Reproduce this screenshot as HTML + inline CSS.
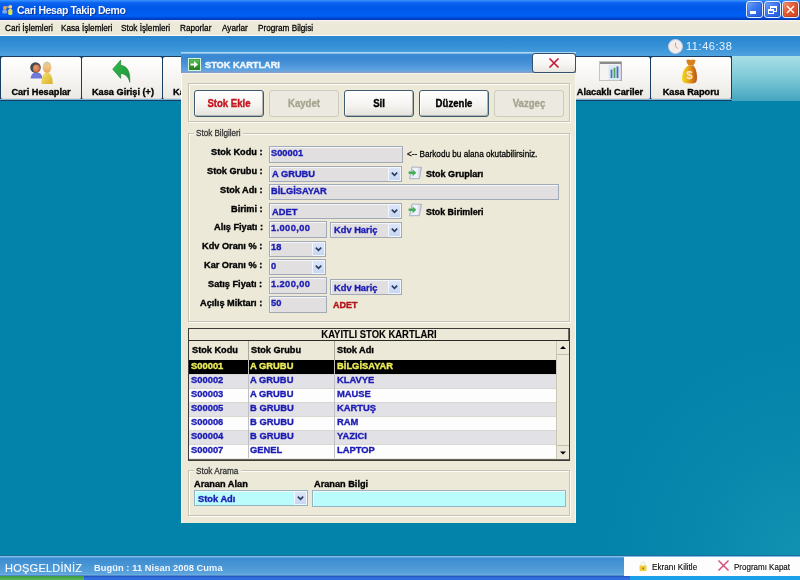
<!DOCTYPE html>
<html><head><meta charset="utf-8">
<style>
*{box-sizing:border-box;margin:0;padding:0}
html,body{width:800px;height:580px;overflow:hidden;background:radial-gradient(200px 220px at 800px 556px,#1292b2 0,#0888ac 50%,#0383aa 100%) #0383aa;font-family:"Liberation Sans",sans-serif;position:relative}
.a{position:absolute}
.t{position:absolute;white-space:nowrap;line-height:1;will-change:transform}

</style></head><body>
<div class="a" style="left:0px;top:0px;width:800px;height:20px;background:linear-gradient(#3d9aff 0,#2a80fa 1px,#0a62f0 3px,#0058e8 8px,#005cf2 14px,#0060f6 16px,#0048d8 18px,#0036b0 20px)"></div>
<svg class="a" style="left:0px;top:0px" width="16" height="18" viewBox="0 0 16 18">
<circle cx="4.8" cy="8" r="1.9" fill="#e8a050"/><rect x="2.2" y="10" width="5" height="3.4" rx="1.5" fill="#80a8f0"/>
<path d="M5.5 7 Q8 6.5 9.5 7.5" stroke="#e0c0a0" stroke-width="1" fill="none"/>
<circle cx="10.3" cy="6.8" r="1.9" fill="#f0d090"/><rect x="8.2" y="9" width="4.2" height="6" rx="1.6" fill="#e0e050"/></svg>
<div class="t" style="top:5.01px;font-size:10.50px;color:#f4f8ff;left:17.00px;transform:scaleY(1.060);transform-origin:0 8.89px;font-weight:bold;-webkit-text-stroke:0.35px #f4f8ff;letter-spacing:-0.38px;text-shadow:1px 1px 0 #0a3aa0;-webkit-text-stroke:0;">Cari Hesap Takip Demo</div>
<div class="a" style="left:746px;top:1px;width:17px;height:17px;border:1px solid #e4eeff;border-radius:3px;background:linear-gradient(135deg,#7aa8ff,#3a78f0 45%,#2058e0);box-shadow:inset 0 0 0 1px rgba(0,0,60,0.15)"></div>
<div class="a" style="left:764px;top:1px;width:17px;height:17px;border:1px solid #e4eeff;border-radius:3px;background:linear-gradient(135deg,#7aa8ff,#3a78f0 45%,#2058e0);box-shadow:inset 0 0 0 1px rgba(0,0,60,0.15)"></div>
<div class="a" style="left:782px;top:1px;width:17px;height:17px;border:1px solid #e4eeff;border-radius:3px;background:linear-gradient(135deg,#f39c7c,#e35a32 45%,#d04020);box-shadow:inset 0 0 0 1px rgba(0,0,60,0.15)"></div>
<div class="a" style="left:750px;top:11px;width:6px;height:2.5px;background:#fff"></div>
<div class="a" style="left:770px;top:6px;width:7px;height:6px;border:1px solid #fff;border-top-width:2px"></div>
<div class="a" style="left:768px;top:9px;width:6px;height:5px;border:1px solid #fff;border-top-width:2px;background:#3a78f0"></div>
<svg class="a" style="left:782px;top:1px" width="17" height="17"><path d="M5 5 L12 12 M12 5 L5 12" stroke="#fff" stroke-width="1.5"/></svg>
<div class="a" style="left:0px;top:20px;width:800px;height:15px;background:linear-gradient(#f6f6f2 0,#eeebde 2px,#ece9d8 4px)"></div>
<div class="a" style="left:0px;top:35px;width:800px;height:1px;background:#fafaf6"></div>
<div class="t" style="top:25.26px;font-size:8.20px;color:#000;left:5.00px;transform:scaleY(1.060);transform-origin:0 6.94px;-webkit-text-stroke:0.25px #000;">Cari İşlemleri</div>
<div class="t" style="top:25.26px;font-size:8.20px;color:#000;left:61.00px;transform:scaleY(1.060);transform-origin:0 6.94px;-webkit-text-stroke:0.25px #000;">Kasa İşlemleri</div>
<div class="t" style="top:25.26px;font-size:8.20px;color:#000;left:121.00px;transform:scaleY(1.060);transform-origin:0 6.94px;-webkit-text-stroke:0.25px #000;">Stok İşlemleri</div>
<div class="t" style="top:25.26px;font-size:8.20px;color:#000;left:180.00px;transform:scaleY(1.060);transform-origin:0 6.94px;-webkit-text-stroke:0.25px #000;">Raporlar</div>
<div class="t" style="top:25.26px;font-size:8.20px;color:#000;left:221.60px;transform:scaleY(1.060);transform-origin:0 6.94px;-webkit-text-stroke:0.25px #000;">Ayarlar</div>
<div class="t" style="top:25.26px;font-size:8.20px;color:#000;left:258.00px;transform:scaleY(1.060);transform-origin:0 6.94px;-webkit-text-stroke:0.25px #000;">Program Bilgisi</div>
<div class="a" style="left:0px;top:36px;width:800px;height:20px;background:linear-gradient(#2a86ce,#3590d6 50%,#4fa2de)"></div>
<div class="a" style="left:0px;top:56px;width:800px;height:45px;background:linear-gradient(#a8dfe6,#80cbd8 45%,#45a5bf)"></div>
<div class="a" style="left:0px;top:56px;width:732px;height:45px;background:#183e64"></div>
<div class="a" style="left:1px;top:57px;width:80px;height:42px;background:linear-gradient(#ffffff,#f6f5f2 50%,#ebe9e3);border-radius:2px;box-shadow:inset 0 -1px 0 #dcd9cf"></div>
<div class="a" style="left:82px;top:57px;width:80px;height:42px;background:linear-gradient(#ffffff,#f6f5f2 50%,#ebe9e3);border-radius:2px;box-shadow:inset 0 -1px 0 #dcd9cf"></div>
<div class="a" style="left:163px;top:57px;width:80px;height:42px;background:linear-gradient(#ffffff,#f6f5f2 50%,#ebe9e3);border-radius:2px;box-shadow:inset 0 -1px 0 #dcd9cf"></div>
<div class="a" style="left:570px;top:57px;width:80px;height:42px;background:linear-gradient(#ffffff,#f6f5f2 50%,#ebe9e3);border-radius:2px;box-shadow:inset 0 -1px 0 #dcd9cf"></div>
<div class="a" style="left:651px;top:57px;width:80px;height:42px;background:linear-gradient(#ffffff,#f6f5f2 50%,#ebe9e3);border-radius:2px;box-shadow:inset 0 -1px 0 #dcd9cf"></div>
<div class="a" style="left:0px;top:99px;width:732px;height:1px;background:#7fb8e0"></div>
<div class="t" style="top:88.01px;font-size:9.20px;color:#000;left:41.00px;transform:translateX(-50%) scaleY(1.060);transform-origin:0 7.79px;font-weight:bold;-webkit-text-stroke:0.35px #000;">Cari Hesaplar</div>
<div class="t" style="top:88.01px;font-size:9.20px;color:#000;left:122.50px;transform:translateX(-50%) scaleY(1.060);transform-origin:0 7.79px;font-weight:bold;-webkit-text-stroke:0.35px #000;">Kasa Girişi (+)</div>
<div class="t" style="top:88.01px;font-size:9.20px;color:#000;left:172.80px;transform:scaleY(1.060);transform-origin:0 7.79px;font-weight:bold;-webkit-text-stroke:0.35px #000;">Kasa Çıkışı (-)</div>
<div class="t" style="top:87.61px;font-size:9.20px;color:#000;left:610.00px;transform:translateX(-50%) scaleY(1.060);transform-origin:0 7.79px;font-weight:bold;-webkit-text-stroke:0.35px #000;">Alacaklı Cariler</div>
<div class="t" style="top:87.61px;font-size:9.20px;color:#000;left:691.30px;transform:translateX(-50%) scaleY(1.060);transform-origin:0 7.79px;font-weight:bold;-webkit-text-stroke:0.35px #000;">Kasa Raporu</div>
<svg class="a" style="left:26px;top:58px" width="32" height="28" viewBox="0 0 32 28">
<defs>
<radialGradient id="face1" cx="0.4" cy="0.4" r="0.7"><stop offset="0" stop-color="#f2a070"/><stop offset="1" stop-color="#b85a30"/></radialGradient>
<linearGradient id="body2" x1="0" y1="0" x2="1" y2="1"><stop offset="0" stop-color="#f4e27a"/><stop offset="1" stop-color="#d8b020"/></linearGradient>
<linearGradient id="head2" x1="0" y1="0" x2="0" y2="1"><stop offset="0" stop-color="#c8c8b0"/><stop offset="0.4" stop-color="#f0c888"/><stop offset="1" stop-color="#e8a860"/></linearGradient>
</defs>
<path d="M4.5 20.5 Q5 14.5 10.5 14.2 Q16 14.5 16.5 20.5 Z" fill="#7078d8"/>
<ellipse cx="9.5" cy="9.5" rx="5.3" ry="5.3" fill="#404c52"/>
<ellipse cx="10.5" cy="10.5" rx="3.6" ry="4" fill="url(#face1)"/>
<path d="M15.5 26 Q15.5 14.5 21 14 Q26.5 14.5 26.8 26 Z" fill="url(#body2)"/>
<ellipse cx="21" cy="9.2" rx="4.4" ry="5.6" fill="url(#head2)"/>
</svg><svg class="a" style="left:106px;top:56px" width="32" height="30" viewBox="0 0 32 30">
<defs><linearGradient id="arr" x1="0" y1="0" x2="1" y2="1"><stop offset="0" stop-color="#2fc24a"/><stop offset="1" stop-color="#1e8e38"/></linearGradient></defs>
<path d="M6.7 13.2 L14.7 4.1 L14.7 9.3 C20.5 9.8 24.5 14.5 23.8 26.4 C22.5 20.5 19 17.8 14.7 17.6 L14.7 22.4 Z" fill="url(#arr)" stroke="#1a7a30" stroke-width="0.6"/>
</svg><svg class="a" style="left:594px;top:56px" width="32" height="30" viewBox="0 0 32 30">
<rect x="5.5" y="5.5" width="22" height="19" fill="#f4f4f2" stroke="#c4c4c4" stroke-width="1"/>
<rect x="26.5" y="6" width="1.2" height="19" fill="#9a9a9a"/>
<rect x="6" y="6" width="21" height="2" fill="#8a8a8a"/>
<rect x="14.5" y="9" width="12" height="15" fill="#dde8f6"/>
<rect x="16.6" y="13.5" width="1.8" height="8.5" fill="#4a74b8"/>
<rect x="19.6" y="11.8" width="1.8" height="10.2" fill="#48a858"/>
<rect x="22.6" y="10.5" width="1.8" height="11.5" fill="#4a68c0"/>
</svg><svg class="a" style="left:674px;top:56px" width="32" height="30" viewBox="0 0 32 30">
<defs><linearGradient id="bag" x1="0" y1="0" x2="1" y2="0"><stop offset="0" stop-color="#f4dc10"/><stop offset="0.4" stop-color="#eaa818"/><stop offset="1" stop-color="#b85420"/></linearGradient></defs>
<path d="M12.3 4.2 Q14 3 16.6 3.9 Q19.2 3 21.6 4.2 Q21.2 7.6 19.2 9.6 L14.6 9.6 Q12.5 7.6 12.3 4.2 Z" fill="#d8801e"/>
<path d="M14.6 9.6 L19.2 9.6 Q21.8 11.8 22.6 17 Q23.6 23 22.2 26 Q20.6 27.6 15.5 27.5 Q9.6 27.5 8.3 25 Q7.4 22 8.9 16.5 Q10.6 11.6 14.6 9.6 Z" fill="url(#bag)"/>
<text x="15.5" y="23" font-family="Liberation Sans" font-weight="bold" font-size="11.5" fill="#fce8bc" text-anchor="middle">$</text>
</svg><svg class="a" style="left:668px;top:39px" width="15" height="15" viewBox="0 0 15 15">
<circle cx="7.5" cy="7.5" r="7" fill="#eef0f4" stroke="#c8ccd4" stroke-width="1"/><circle cx="7.5" cy="7.5" r="5" fill="#f6ece6"/>
<path d="M7.5 3.5 V7.5 L10 9.5" stroke="#b9a9a0" stroke-width="1" fill="none"/></svg>
<div class="t" style="top:41.49px;font-size:11.00px;color:#eaf4ff;left:686.00px;transform:scaleY(1.060);transform-origin:0 9.31px;-webkit-text-stroke:0.25px #eaf4ff;letter-spacing:0.55px;-webkit-text-stroke:0;">11:46:38</div>
<div class="a" style="left:0px;top:555px;width:800px;height:1px;background:#1a6e9a"></div>
<div class="a" style="left:0px;top:556px;width:800px;height:20px;background:linear-gradient(#80bce8 0,#80bce8 1px,#3a8cd0 2px,#4a96d4 50%,#5ca4dc 18px,#78b6e6 19px,#2a5cb0 20px)"></div>
<div class="t" style="top:562.59px;font-size:11.00px;color:#f4faff;left:5.00px;transform:scaleY(1.060);transform-origin:0 9.31px;-webkit-text-stroke:0.25px #f4faff;letter-spacing:0.25px;-webkit-text-stroke:0.15px #f4faff;">HOŞGELDİNİZ</div>
<div class="t" style="top:563.73px;font-size:9.30px;color:#f0f6ff;left:94.00px;transform:scaleY(1.060);transform-origin:0 7.87px;font-weight:bold;-webkit-text-stroke:0.35px #f0f6ff;letter-spacing:0.06px;-webkit-text-stroke:0;">Bugün : 11 Nisan 2008 Cuma</div>
<div class="a" style="left:624px;top:557px;width:176px;height:19px;background:#fdfdfd"></div>
<svg class="a" style="left:638px;top:560px" width="10" height="12" viewBox="0 0 10 12">
<path d="M3 5.5 V4 Q3 2 5 2 Q7 2 7 4 V5.5" fill="none" stroke="#ece6cc" stroke-width="1.1"/>
<rect x="1.6" y="5.5" width="6.8" height="5.5" rx="0.8" fill="#f2cc38"/><rect x="4.5" y="7.6" width="1.2" height="1.6" fill="#6a5018"/></svg><div class="t" style="top:563.70px;font-size:8.15px;color:#000;left:652.30px;transform:scaleY(1.060);transform-origin:0 6.90px;-webkit-text-stroke:0.25px #000;-webkit-text-stroke:0.1px #000;">Ekranı Kilitle</div>
<svg class="a" style="left:717px;top:559px" width="13" height="13"><path d="M1.5 1.5 L11.5 11.5 M11.5 1.5 L1.5 11.5" stroke="#d8507a" stroke-width="1.5"/></svg>
<div class="t" style="top:563.83px;font-size:8.00px;color:#000;left:733.70px;transform:scaleY(1.060);transform-origin:0 6.77px;-webkit-text-stroke:0.25px #000;-webkit-text-stroke:0.1px #000;">Programı Kapat</div>
<div class="a" style="left:0px;top:576px;width:800px;height:4px;background:linear-gradient(#2450b8,#3070e0 2px)"></div>
<div class="a" style="left:0px;top:576px;width:84px;height:4px;background:linear-gradient(#3c9a3c,#5cb85c)"></div>
<div class="a" style="left:630px;top:576px;width:170px;height:4px;background:#1aa0e8"></div>
<div class="a" style="left:181px;top:52px;width:395px;height:471px;background:#ece9d8;border-left:1px solid #fdfdfb"></div>
<div class="a" style="left:181px;top:52px;width:395px;height:21px;background:linear-gradient(#b0dcf8 0,#a8d4f4 1px,#3c8ad2 2.5px,#3a88d2 6px,#4892d8 12px,#5aa0e0 17px,#62a6e2 19px,#8a9cc8 20px,#8a9cc8 21px)"></div>
<div class="a" style="left:181px;top:73px;width:395px;height:1px;background:#f6f4ea"></div>
<div class="a" style="left:575px;top:73px;width:1px;height:450px;background:#f8f6ee"></div>
<svg class="a" style="left:188px;top:58px" width="13" height="13" viewBox="0 0 13 13">
<rect x="0.5" y="0.5" width="12" height="12" fill="#2f8f2f" stroke="#d8f4d8" stroke-width="1"/>
<rect x="1.5" y="1.5" width="10" height="10" fill="url(#gg)"/>
<defs><linearGradient id="gg" x1="0" y1="0" x2="0" y2="1"><stop offset="0" stop-color="#5cc05c"/><stop offset="1" stop-color="#1f7f1f"/></linearGradient></defs>
<path d="M2.5 5.5 H6 V3 L10 6.5 L6 10 V7.5 H2.5 Z" fill="#f4fff4"/></svg>
<div class="t" style="top:60.81px;font-size:9.20px;color:#f2f8ff;left:204.70px;transform:scaleY(1.060);transform-origin:0 7.79px;font-weight:bold;-webkit-text-stroke:0.35px #f2f8ff;text-shadow:0 0 1px #6aa0d8;">STOK KARTLARI</div>
<div class="a" style="left:532px;top:53px;width:44px;height:20px;border:1px solid #33516c;border-radius:3px;background:linear-gradient(#ffffff,#f6f5f2 60%,#e8e6e0)"></div>
<svg class="a" style="left:547px;top:56px" width="14" height="14"><path d="M2.5 2.5 L11.5 11.5 M11.5 2.5 L2.5 11.5" stroke="#c41a3a" stroke-width="1.7"/></svg>
<div class="a" style="left:188px;top:83px;width:382px;height:39px;border:1px solid #c6c3b3;box-shadow:inset 1px 1px 0 #fdfdf8,1px 1px 0 #fdfdf8"></div>
<div class="a" style="left:194px;top:90px;width:70px;height:27px;border:1px solid #3f5b70;border-radius:3px;background:linear-gradient(#ffffff,#f4f3ef 60%,#e4e2da);box-shadow:inset -1px -1px 0 #b0b4b0, inset 1px 1px 0 #fff"></div>
<div class="t" style="top:99.47px;font-size:9.60px;color:#c5151e;left:229.00px;transform:translateX(-50%) scaleY(1.060);transform-origin:0 8.13px;font-weight:bold;-webkit-text-stroke:0.35px #c5151e;">Stok Ekle</div>
<div class="a" style="left:269px;top:90px;width:70px;height:27px;border:1px solid #cdcbbd;border-radius:3px;background:#ebe9e0"></div>
<div class="t" style="top:99.47px;font-size:9.60px;color:#a4a690;left:304.00px;transform:translateX(-50%) scaleY(1.060);transform-origin:0 8.13px;font-weight:bold;-webkit-text-stroke:0.35px #a4a690;">Kaydet</div>
<div class="a" style="left:344px;top:90px;width:70px;height:27px;border:1px solid #3f5b70;border-radius:3px;background:linear-gradient(#ffffff,#f4f3ef 60%,#e4e2da);box-shadow:inset -1px -1px 0 #b0b4b0, inset 1px 1px 0 #fff"></div>
<div class="t" style="top:99.47px;font-size:9.60px;color:#000;left:379.00px;transform:translateX(-50%) scaleY(1.060);transform-origin:0 8.13px;font-weight:bold;-webkit-text-stroke:0.35px #000;">Sil</div>
<div class="a" style="left:419px;top:90px;width:70px;height:27px;border:1px solid #3f5b70;border-radius:3px;background:linear-gradient(#ffffff,#f4f3ef 60%,#e4e2da);box-shadow:inset -1px -1px 0 #b0b4b0, inset 1px 1px 0 #fff"></div>
<div class="t" style="top:99.47px;font-size:9.60px;color:#000;left:454.00px;transform:translateX(-50%) scaleY(1.060);transform-origin:0 8.13px;font-weight:bold;-webkit-text-stroke:0.35px #000;">Düzenle</div>
<div class="a" style="left:494px;top:90px;width:70px;height:27px;border:1px solid #cdcbbd;border-radius:3px;background:#ebe9e0"></div>
<div class="t" style="top:99.47px;font-size:9.60px;color:#a4a690;left:529.00px;transform:translateX(-50%) scaleY(1.060);transform-origin:0 8.13px;font-weight:bold;-webkit-text-stroke:0.35px #a4a690;">Vazgeç</div>
<div class="a" style="left:188px;top:133px;width:382px;height:189px;border:1px solid #c6c3b3;box-shadow:inset 1px 1px 0 #fdfdf8,1px 1px 0 #fdfdf8"></div>
<div class="a" style="left:194px;top:128px;width:49px;height:10px;background:#ece9d8"></div>
<div class="t" style="top:130.44px;font-size:8.10px;color:#333;left:195.70px;transform:scaleY(1.060);transform-origin:0 6.86px;-webkit-text-stroke:0.25px #333;">Stok Bilgileri</div>
<div class="t" style="top:148.21px;font-size:9.20px;color:#000;right:537.40px;transform:scaleY(1.060);transform-origin:0 7.79px;font-weight:bold;-webkit-text-stroke:0.35px #000;">Stok Kodu :</div>
<div class="t" style="top:167.00px;font-size:9.20px;color:#000;right:537.40px;transform:scaleY(1.060);transform-origin:0 7.79px;font-weight:bold;-webkit-text-stroke:0.35px #000;">Stok Grubu :</div>
<div class="t" style="top:185.79px;font-size:9.20px;color:#000;right:537.40px;transform:scaleY(1.060);transform-origin:0 7.79px;font-weight:bold;-webkit-text-stroke:0.35px #000;">Stok Adı :</div>
<div class="t" style="top:204.58px;font-size:9.20px;color:#000;right:537.40px;transform:scaleY(1.060);transform-origin:0 7.79px;font-weight:bold;-webkit-text-stroke:0.35px #000;">Birimi :</div>
<div class="t" style="top:223.37px;font-size:9.20px;color:#000;right:537.40px;transform:scaleY(1.060);transform-origin:0 7.79px;font-weight:bold;-webkit-text-stroke:0.35px #000;">Alış Fiyatı :</div>
<div class="t" style="top:242.16px;font-size:9.20px;color:#000;right:537.40px;transform:scaleY(1.060);transform-origin:0 7.79px;font-weight:bold;-webkit-text-stroke:0.35px #000;">Kdv Oranı % :</div>
<div class="t" style="top:260.95px;font-size:9.20px;color:#000;right:537.40px;transform:scaleY(1.060);transform-origin:0 7.79px;font-weight:bold;-webkit-text-stroke:0.35px #000;">Kar Oranı % :</div>
<div class="t" style="top:279.74px;font-size:9.20px;color:#000;right:537.40px;transform:scaleY(1.060);transform-origin:0 7.79px;font-weight:bold;-webkit-text-stroke:0.35px #000;">Satış Fiyatı :</div>
<div class="t" style="top:298.53px;font-size:9.20px;color:#000;right:537.40px;transform:scaleY(1.060);transform-origin:0 7.79px;font-weight:bold;-webkit-text-stroke:0.35px #000;">Açılış Miktarı :</div>
<div class="a" style="left:269px;top:146px;width:134px;height:17px;background:#e1dfe0;border:1px solid #a2aab6;box-shadow:inset 1px 1px 0 #f4f6fb"></div>
<div class="a" style="left:269px;top:166px;width:133px;height:16px;background:#e1dfe0;border:1px solid #a2aab6;box-shadow:inset 1px 1px 0 #f4f6fb"></div>
<div class="a" style="left:388px;top:167px;width:13px;height:14px;background:linear-gradient(#dce6f8,#c8d6f2);border:1px solid #f2f6fe;border-radius:1px"></div>
<svg class="a" style="left:388px;top:167px" width="13" height="14"><path d="M3.8 5.6 L6.5 8.4 L9.2 5.6" stroke="#2a3c60" stroke-width="1.6" fill="none"/></svg>
<div class="a" style="left:269px;top:184px;width:290px;height:16px;background:#e1dfe0;border:1px solid #a2aab6;box-shadow:inset 1px 1px 0 #f4f6fb"></div>
<div class="a" style="left:269px;top:203px;width:133px;height:16px;background:#e1dfe0;border:1px solid #a2aab6;box-shadow:inset 1px 1px 0 #f4f6fb"></div>
<div class="a" style="left:388px;top:204px;width:13px;height:14px;background:linear-gradient(#dce6f8,#c8d6f2);border:1px solid #f2f6fe;border-radius:1px"></div>
<svg class="a" style="left:388px;top:204px" width="13" height="14"><path d="M3.8 5.6 L6.5 8.4 L9.2 5.6" stroke="#2a3c60" stroke-width="1.6" fill="none"/></svg>
<div class="a" style="left:269px;top:221px;width:58px;height:17px;background:#e1dfe0;border:1px solid #a2aab6;box-shadow:inset 1px 1px 0 #f4f6fb"></div>
<div class="a" style="left:330px;top:222px;width:72px;height:16px;background:#e1dfe0;border:1px solid #a2aab6;box-shadow:inset 1px 1px 0 #f4f6fb"></div>
<div class="a" style="left:388px;top:223px;width:13px;height:14px;background:linear-gradient(#dce6f8,#c8d6f2);border:1px solid #f2f6fe;border-radius:1px"></div>
<svg class="a" style="left:388px;top:223px" width="13" height="14"><path d="M3.8 5.6 L6.5 8.4 L9.2 5.6" stroke="#2a3c60" stroke-width="1.6" fill="none"/></svg>
<div class="a" style="left:269px;top:241px;width:57px;height:16px;background:#e1dfe0;border:1px solid #a2aab6;box-shadow:inset 1px 1px 0 #f4f6fb"></div>
<div class="a" style="left:312px;top:242px;width:13px;height:14px;background:linear-gradient(#dce6f8,#c8d6f2);border:1px solid #f2f6fe;border-radius:1px"></div>
<svg class="a" style="left:312px;top:242px" width="13" height="14"><path d="M3.8 5.6 L6.5 8.4 L9.2 5.6" stroke="#2a3c60" stroke-width="1.6" fill="none"/></svg>
<div class="a" style="left:269px;top:259px;width:57px;height:16px;background:#e1dfe0;border:1px solid #a2aab6;box-shadow:inset 1px 1px 0 #f4f6fb"></div>
<div class="a" style="left:312px;top:260px;width:13px;height:14px;background:linear-gradient(#dce6f8,#c8d6f2);border:1px solid #f2f6fe;border-radius:1px"></div>
<svg class="a" style="left:312px;top:260px" width="13" height="14"><path d="M3.8 5.6 L6.5 8.4 L9.2 5.6" stroke="#2a3c60" stroke-width="1.6" fill="none"/></svg>
<div class="a" style="left:269px;top:277px;width:58px;height:17px;background:#e1dfe0;border:1px solid #a2aab6;box-shadow:inset 1px 1px 0 #f4f6fb"></div>
<div class="a" style="left:330px;top:279px;width:72px;height:16px;background:#e1dfe0;border:1px solid #a2aab6;box-shadow:inset 1px 1px 0 #f4f6fb"></div>
<div class="a" style="left:388px;top:280px;width:13px;height:14px;background:linear-gradient(#dce6f8,#c8d6f2);border:1px solid #f2f6fe;border-radius:1px"></div>
<svg class="a" style="left:388px;top:280px" width="13" height="14"><path d="M3.8 5.6 L6.5 8.4 L9.2 5.6" stroke="#2a3c60" stroke-width="1.6" fill="none"/></svg>
<div class="a" style="left:269px;top:296px;width:58px;height:17px;background:#e1dfe0;border:1px solid #a2aab6;box-shadow:inset 1px 1px 0 #f4f6fb"></div>
<div class="t" style="top:149.03px;font-size:9.30px;color:#1c1cb4;left:271.00px;transform:scaleY(1.060);transform-origin:0 7.87px;font-weight:bold;-webkit-text-stroke:0.35px #1c1cb4;">S00001</div>
<div class="t" style="top:169.73px;font-size:9.30px;color:#1c1cb4;left:272.00px;transform:scaleY(1.060);transform-origin:0 7.87px;font-weight:bold;-webkit-text-stroke:0.35px #1c1cb4;">A GRUBU</div>
<div class="t" style="top:187.13px;font-size:9.30px;color:#1c1cb4;left:270.50px;transform:scaleY(1.060);transform-origin:0 7.87px;font-weight:bold;-webkit-text-stroke:0.35px #1c1cb4;">BİLGİSAYAR</div>
<div class="t" style="top:207.63px;font-size:9.30px;color:#1c1cb4;left:272.00px;transform:scaleY(1.060);transform-origin:0 7.87px;font-weight:bold;-webkit-text-stroke:0.35px #1c1cb4;">ADET</div>
<div class="t" style="top:223.93px;font-size:9.30px;color:#1c1cb4;left:270.50px;transform:scaleY(1.060);transform-origin:0 7.87px;font-weight:bold;-webkit-text-stroke:0.35px #1c1cb4;letter-spacing:0.40px;">1.000,00</div>
<div class="t" style="top:243.13px;font-size:9.30px;color:#1c1cb4;left:271.00px;transform:scaleY(1.060);transform-origin:0 7.87px;font-weight:bold;-webkit-text-stroke:0.35px #1c1cb4;">18</div>
<div class="t" style="top:262.13px;font-size:9.30px;color:#1c1cb4;left:271.00px;transform:scaleY(1.060);transform-origin:0 7.87px;font-weight:bold;-webkit-text-stroke:0.35px #1c1cb4;">0</div>
<div class="t" style="top:280.23px;font-size:9.30px;color:#1c1cb4;left:270.50px;transform:scaleY(1.060);transform-origin:0 7.87px;font-weight:bold;-webkit-text-stroke:0.35px #1c1cb4;letter-spacing:0.40px;">1.200,00</div>
<div class="t" style="top:299.13px;font-size:9.30px;color:#1c1cb4;left:271.00px;transform:scaleY(1.060);transform-origin:0 7.87px;font-weight:bold;-webkit-text-stroke:0.35px #1c1cb4;">50</div>
<div class="t" style="top:226.33px;font-size:9.30px;color:#1c1cb4;left:334.00px;transform:scaleY(1.060);transform-origin:0 7.87px;font-weight:bold;-webkit-text-stroke:0.35px #1c1cb4;">Kdv Hariç</div>
<div class="t" style="top:283.93px;font-size:9.30px;color:#1c1cb4;left:334.00px;transform:scaleY(1.060);transform-origin:0 7.87px;font-weight:bold;-webkit-text-stroke:0.35px #1c1cb4;">Kdv Hariç</div>
<div class="t" style="top:301.48px;font-size:9.00px;color:#b0141a;left:332.50px;transform:scaleY(1.060);transform-origin:0 7.62px;font-weight:bold;-webkit-text-stroke:0.35px #b0141a;">ADET</div>
<div class="t" style="top:151.06px;font-size:8.20px;color:#000;left:407.40px;transform:scaleY(1.060);transform-origin:0 6.94px;-webkit-text-stroke:0.25px #000;">&lt;-- Barkodu bu alana okutabilirsiniz.</div>
<svg class="a" style="left:404px;top:162px" width="24" height="22" viewBox="0 0 24 22">
<defs><linearGradient id="pg162" x1="0" y1="0" x2="1" y2="0"><stop offset="0" stop-color="#dfe8f6"/><stop offset="0.6" stop-color="#f2f4fc"/><stop offset="1" stop-color="#c8cce0"/></linearGradient></defs>
<path d="M8 5 L17.5 5.3 L15.4 16.6 L5.6 16.8 Z" fill="url(#pg162)" stroke="#a4a8c0" stroke-width="0.9"/>
<path d="M4.6 9.6 H8.6 V7.4 L12.4 10.8 L8.6 14.2 V12 H4.6 Z" fill="#48ac58"/></svg>
<svg class="a" style="left:404px;top:199px" width="24" height="22" viewBox="0 0 24 22">
<defs><linearGradient id="pg199" x1="0" y1="0" x2="1" y2="0"><stop offset="0" stop-color="#dfe8f6"/><stop offset="0.6" stop-color="#f2f4fc"/><stop offset="1" stop-color="#c8cce0"/></linearGradient></defs>
<path d="M8 5 L17.5 5.3 L15.4 16.6 L5.6 16.8 Z" fill="url(#pg199)" stroke="#a4a8c0" stroke-width="0.9"/>
<path d="M4.6 9.6 H8.6 V7.4 L12.4 10.8 L8.6 14.2 V12 H4.6 Z" fill="#48ac58"/></svg>
<div class="t" style="top:169.94px;font-size:9.05px;color:#000;left:426.00px;transform:scaleY(1.060);transform-origin:0 7.66px;font-weight:bold;-webkit-text-stroke:0.35px #000;">Stok Grupları</div>
<div class="t" style="top:207.91px;font-size:8.85px;color:#000;left:426.00px;transform:scaleY(1.060);transform-origin:0 7.49px;font-weight:bold;-webkit-text-stroke:0.35px #000;">Stok Birimleri</div>
<div class="a" style="left:188px;top:328px;width:382px;height:133px;background:#ece9d8;border:1px solid #3a3a36;box-shadow:inset -1px -1px 0 #6a6860"></div>
<div class="a" style="left:189px;top:340px;width:380px;height:1px;background:#2a2a28"></div>
<div class="t" style="top:330.00px;font-size:9.45px;color:#000;left:378.50px;transform:translateX(-50%) scaleY(1.060);transform-origin:0 8.00px;font-weight:bold;-webkit-text-stroke:0.35px #000;-webkit-text-stroke:0.1px #000;">KAYITLI STOK KARTLARI</div>
<div class="a" style="left:189px;top:341px;width:367px;height:19px;background:#ece9d8"></div>
<div class="a" style="left:248px;top:341px;width:1px;height:19px;background:#a9a89c"></div>
<div class="a" style="left:334px;top:341px;width:1px;height:19px;background:#a9a89c"></div>
<div class="t" style="top:346.21px;font-size:9.20px;color:#000;left:191.60px;transform:scaleY(1.060);transform-origin:0 7.79px;font-weight:bold;-webkit-text-stroke:0.35px #000;">Stok Kodu</div>
<div class="t" style="top:346.21px;font-size:9.20px;color:#000;left:250.60px;transform:scaleY(1.060);transform-origin:0 7.79px;font-weight:bold;-webkit-text-stroke:0.35px #000;">Stok Grubu</div>
<div class="t" style="top:346.21px;font-size:9.20px;color:#000;left:337.00px;transform:scaleY(1.060);transform-origin:0 7.79px;font-weight:bold;-webkit-text-stroke:0.35px #000;">Stok Adı</div>
<div class="a" style="left:189px;top:360px;width:367px;height:14px;background:#000"></div>
<div class="a" style="left:248px;top:360px;width:1px;height:14px;background:#c0c0c0"></div>
<div class="a" style="left:334px;top:360px;width:1px;height:14px;background:#c0c0c0"></div>
<div class="t" style="top:361.34px;font-size:9.40px;color:#ecec5a;left:191.00px;transform:scaleY(1.060);transform-origin:0 7.96px;font-weight:bold;-webkit-text-stroke:0.35px #ecec5a;">S00001</div>
<div class="t" style="top:361.34px;font-size:9.40px;color:#ecec5a;left:250.00px;transform:scaleY(1.060);transform-origin:0 7.96px;font-weight:bold;-webkit-text-stroke:0.35px #ecec5a;">A GRUBU</div>
<div class="t" style="top:361.34px;font-size:9.40px;color:#ecec5a;left:336.60px;transform:scaleY(1.060);transform-origin:0 7.96px;font-weight:bold;-webkit-text-stroke:0.35px #ecec5a;">BİLGİSAYAR</div>
<div class="a" style="left:189px;top:374px;width:367px;height:14px;background:#e2e1e6"></div>
<div class="a" style="left:189px;top:374px;width:367px;height:1px;background:#d8d8d0"></div>
<div class="a" style="left:248px;top:374px;width:1px;height:14px;background:#c0c0c0"></div>
<div class="a" style="left:334px;top:374px;width:1px;height:14px;background:#c0c0c0"></div>
<div class="t" style="top:375.34px;font-size:9.40px;color:#1c1cb4;left:191.00px;transform:scaleY(1.060);transform-origin:0 7.96px;font-weight:bold;-webkit-text-stroke:0.35px #1c1cb4;">S00002</div>
<div class="t" style="top:375.34px;font-size:9.40px;color:#1c1cb4;left:250.00px;transform:scaleY(1.060);transform-origin:0 7.96px;font-weight:bold;-webkit-text-stroke:0.35px #1c1cb4;">A GRUBU</div>
<div class="t" style="top:375.34px;font-size:9.40px;color:#1c1cb4;left:336.60px;transform:scaleY(1.060);transform-origin:0 7.96px;font-weight:bold;-webkit-text-stroke:0.35px #1c1cb4;">KLAVYE</div>
<div class="a" style="left:189px;top:388px;width:367px;height:14px;background:#fdfdfd"></div>
<div class="a" style="left:189px;top:388px;width:367px;height:1px;background:#d8d8d0"></div>
<div class="a" style="left:248px;top:388px;width:1px;height:14px;background:#c0c0c0"></div>
<div class="a" style="left:334px;top:388px;width:1px;height:14px;background:#c0c0c0"></div>
<div class="t" style="top:389.34px;font-size:9.40px;color:#1c1cb4;left:191.00px;transform:scaleY(1.060);transform-origin:0 7.96px;font-weight:bold;-webkit-text-stroke:0.35px #1c1cb4;">S00003</div>
<div class="t" style="top:389.34px;font-size:9.40px;color:#1c1cb4;left:250.00px;transform:scaleY(1.060);transform-origin:0 7.96px;font-weight:bold;-webkit-text-stroke:0.35px #1c1cb4;">A GRUBU</div>
<div class="t" style="top:389.34px;font-size:9.40px;color:#1c1cb4;left:336.60px;transform:scaleY(1.060);transform-origin:0 7.96px;font-weight:bold;-webkit-text-stroke:0.35px #1c1cb4;">MAUSE</div>
<div class="a" style="left:189px;top:402px;width:367px;height:14px;background:#e2e1e6"></div>
<div class="a" style="left:189px;top:402px;width:367px;height:1px;background:#d8d8d0"></div>
<div class="a" style="left:248px;top:402px;width:1px;height:14px;background:#c0c0c0"></div>
<div class="a" style="left:334px;top:402px;width:1px;height:14px;background:#c0c0c0"></div>
<div class="t" style="top:403.34px;font-size:9.40px;color:#1c1cb4;left:191.00px;transform:scaleY(1.060);transform-origin:0 7.96px;font-weight:bold;-webkit-text-stroke:0.35px #1c1cb4;">S00005</div>
<div class="t" style="top:403.34px;font-size:9.40px;color:#1c1cb4;left:250.00px;transform:scaleY(1.060);transform-origin:0 7.96px;font-weight:bold;-webkit-text-stroke:0.35px #1c1cb4;">B GRUBU</div>
<div class="t" style="top:403.34px;font-size:9.40px;color:#1c1cb4;left:336.60px;transform:scaleY(1.060);transform-origin:0 7.96px;font-weight:bold;-webkit-text-stroke:0.35px #1c1cb4;">KARTUŞ</div>
<div class="a" style="left:189px;top:416px;width:367px;height:14px;background:#fdfdfd"></div>
<div class="a" style="left:189px;top:416px;width:367px;height:1px;background:#d8d8d0"></div>
<div class="a" style="left:248px;top:416px;width:1px;height:14px;background:#c0c0c0"></div>
<div class="a" style="left:334px;top:416px;width:1px;height:14px;background:#c0c0c0"></div>
<div class="t" style="top:417.34px;font-size:9.40px;color:#1c1cb4;left:191.00px;transform:scaleY(1.060);transform-origin:0 7.96px;font-weight:bold;-webkit-text-stroke:0.35px #1c1cb4;">S00006</div>
<div class="t" style="top:417.34px;font-size:9.40px;color:#1c1cb4;left:250.00px;transform:scaleY(1.060);transform-origin:0 7.96px;font-weight:bold;-webkit-text-stroke:0.35px #1c1cb4;">B GRUBU</div>
<div class="t" style="top:417.34px;font-size:9.40px;color:#1c1cb4;left:336.60px;transform:scaleY(1.060);transform-origin:0 7.96px;font-weight:bold;-webkit-text-stroke:0.35px #1c1cb4;">RAM</div>
<div class="a" style="left:189px;top:430px;width:367px;height:14px;background:#e2e1e6"></div>
<div class="a" style="left:189px;top:430px;width:367px;height:1px;background:#d8d8d0"></div>
<div class="a" style="left:248px;top:430px;width:1px;height:14px;background:#c0c0c0"></div>
<div class="a" style="left:334px;top:430px;width:1px;height:14px;background:#c0c0c0"></div>
<div class="t" style="top:431.34px;font-size:9.40px;color:#1c1cb4;left:191.00px;transform:scaleY(1.060);transform-origin:0 7.96px;font-weight:bold;-webkit-text-stroke:0.35px #1c1cb4;">S00004</div>
<div class="t" style="top:431.34px;font-size:9.40px;color:#1c1cb4;left:250.00px;transform:scaleY(1.060);transform-origin:0 7.96px;font-weight:bold;-webkit-text-stroke:0.35px #1c1cb4;">B GRUBU</div>
<div class="t" style="top:431.34px;font-size:9.40px;color:#1c1cb4;left:336.60px;transform:scaleY(1.060);transform-origin:0 7.96px;font-weight:bold;-webkit-text-stroke:0.35px #1c1cb4;">YAZICI</div>
<div class="a" style="left:189px;top:444px;width:367px;height:14px;background:#fdfdfd"></div>
<div class="a" style="left:189px;top:444px;width:367px;height:1px;background:#d8d8d0"></div>
<div class="a" style="left:248px;top:444px;width:1px;height:14px;background:#c0c0c0"></div>
<div class="a" style="left:334px;top:444px;width:1px;height:14px;background:#c0c0c0"></div>
<div class="t" style="top:445.34px;font-size:9.40px;color:#1c1cb4;left:191.00px;transform:scaleY(1.060);transform-origin:0 7.96px;font-weight:bold;-webkit-text-stroke:0.35px #1c1cb4;">S00007</div>
<div class="t" style="top:445.34px;font-size:9.40px;color:#1c1cb4;left:250.00px;transform:scaleY(1.060);transform-origin:0 7.96px;font-weight:bold;-webkit-text-stroke:0.35px #1c1cb4;">GENEL</div>
<div class="t" style="top:445.34px;font-size:9.40px;color:#1c1cb4;left:336.60px;transform:scaleY(1.060);transform-origin:0 7.96px;font-weight:bold;-webkit-text-stroke:0.35px #1c1cb4;">LAPTOP</div>
<div class="a" style="left:556px;top:341px;width:13px;height:118px;background:#ece9d8;border-left:1px solid #c8c6b6"></div>
<div class="a" style="left:556px;top:341px;width:13px;height:14px;background:#ece9d8;border-bottom:1px solid #c0beb0;border-left:1px solid #c8c6b6"></div>
<div class="a" style="left:556px;top:445px;width:13px;height:14px;background:#ece9d8;border-top:1px solid #c0beb0;border-left:1px solid #c8c6b6"></div>
<svg class="a" style="left:557px;top:342px" width="12" height="10"><path d="M3 7 L6 4 L9 7 Z" fill="#000"/></svg>
<svg class="a" style="left:557px;top:448px" width="12" height="10"><path d="M3 3.5 L6 6.5 L9 3.5 Z" fill="#000"/></svg>
<div class="a" style="left:188px;top:470px;width:382px;height:46px;border:1px solid #c6c3b3;box-shadow:inset 1px 1px 0 #fdfdf8,1px 1px 0 #fdfdf8"></div>
<div class="a" style="left:194px;top:465px;width:47px;height:10px;background:#ece9d8"></div>
<div class="t" style="top:468.06px;font-size:8.20px;color:#333;left:195.60px;transform:scaleY(1.060);transform-origin:0 6.94px;-webkit-text-stroke:0.25px #333;">Stok Arama</div>
<div class="t" style="top:479.81px;font-size:9.20px;color:#000;left:194.40px;transform:scaleY(1.060);transform-origin:0 7.79px;font-weight:bold;-webkit-text-stroke:0.35px #000;">Aranan Alan</div>
<div class="t" style="top:479.81px;font-size:9.20px;color:#000;left:313.60px;transform:scaleY(1.060);transform-origin:0 7.79px;font-weight:bold;-webkit-text-stroke:0.35px #000;">Aranan Bilgi</div>
<div class="a" style="left:194px;top:490px;width:114px;height:16px;background:#bafbfc;border:1px solid #94b4c4;box-shadow:inset 1px 1px 0 #f4f6fb"></div>
<div class="a" style="left:294px;top:491px;width:13px;height:14px;background:linear-gradient(#dce6f8,#c8d6f2);border:1px solid #f2f6fe;border-radius:1px"></div>
<svg class="a" style="left:294px;top:491px" width="13" height="14"><path d="M3.8 5.6 L6.5 8.4 L9.2 5.6" stroke="#2a3c60" stroke-width="1.6" fill="none"/></svg>
<div class="a" style="left:312px;top:490px;width:254px;height:17px;background:#bafbfc;border:1px solid #94b4c4;box-shadow:inset 1px 1px 0 #f4f6fb"></div>
<div class="t" style="top:494.93px;font-size:9.30px;color:#1c1cb4;left:198.00px;transform:scaleY(1.060);transform-origin:0 7.87px;font-weight:bold;-webkit-text-stroke:0.35px #1c1cb4;">Stok Adı</div>
</body></html>
